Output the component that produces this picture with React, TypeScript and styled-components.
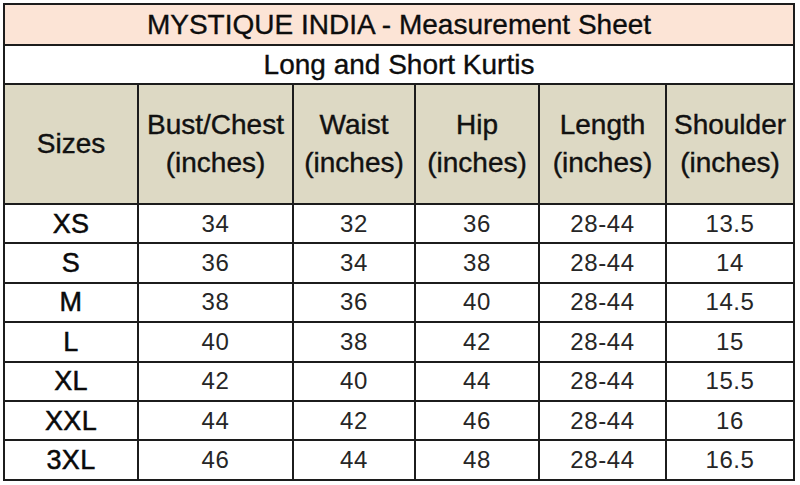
import React from "react";
import styled, { createGlobalStyle } from "styled-components";

const GlobalStyle = createGlobalStyle`
  html, body {
    margin: 0;
    padding: 0;
    background: #ffffff;
  }
  body {
    font-family: "Liberation Sans", Arial, sans-serif;
    color: #000;
  }
`;

const Page = styled.div`
  width: 800px;
  height: 485px;
  padding: 3px 0 0 3px;
  box-sizing: border-box;
  background: #ffffff;
  overflow: hidden;
`;

const Sheet = styled.table`
  width: 792px;
  table-layout: fixed;
  border-collapse: collapse;
  border: 2px solid #1c1c1c;
  font-family: "Liberation Sans", Arial, sans-serif;
`;

const Cell = styled.td<{ $bg?: string }>`
  border: 2px solid #1c1c1c;
  padding: 0;
  text-align: center;
  vertical-align: middle;
  background: ${(p) => p.$bg || "#ffffff"};
`;

const TitleCell = styled(Cell)`
  height: 38px;
  font-size: 28px;
  line-height: 32px;
  color: #0d0d0d;
  padding-top: 1px;
  -webkit-text-stroke: 0.35px #0d0d0d;
`;

const SubtitleCell = styled(Cell)`
  height: 37px;
  font-size: 28px;
  line-height: 32px;
  color: #0d0d0d;
  -webkit-text-stroke: 0.35px #0d0d0d;
`;

const HeadCell = styled(Cell)`
  height: 118px;
  font-size: 28px;
  line-height: 38px;
  color: #111;
  white-space: nowrap;
  -webkit-text-stroke: 0.4px #111;
`;

const Row = styled.tr`
  height: 39.4px;
`;

const SizeCell = styled(Cell)`
  font-size: 27px;
  line-height: 30px;
  color: #0a0a0a;
  letter-spacing: 0.3px;
  -webkit-text-stroke: 0.5px #0a0a0a;
`;

const NumCell = styled(Cell)`
  font-size: 24px;
  line-height: 30px;
  color: #262626;
  letter-spacing: 0.6px;
`;

const columns = [134, 155, 122, 124, 127, 128];

const headers: [string, string?][] = [
  ["Sizes"],
  ["Bust/Chest", "(inches)"],
  ["Waist", "(inches)"],
  ["Hip", "(inches)"],
  ["Length", "(inches)"],
  ["Shoulder", "(inches)"],
];

const rows: [string, string, string, string, string, string][] = [
  ["XS", "34", "32", "36", "28-44", "13.5"],
  ["S", "36", "34", "38", "28-44", "14"],
  ["M", "38", "36", "40", "28-44", "14.5"],
  ["L", "40", "38", "42", "28-44", "15"],
  ["XL", "42", "40", "44", "28-44", "15.5"],
  ["XXL", "44", "42", "46", "28-44", "16"],
  ["3XL", "46", "44", "48", "28-44", "16.5"],
];

export default function App() {
  return (
    <Page>
      <GlobalStyle />
      <Sheet>
        <colgroup>
          {columns.map((w, i) => (
            <col key={i} style={{ width: w }} />
          ))}
        </colgroup>
        <tbody>
          <tr>
            <TitleCell colSpan={6} $bg="#fce4d6">
              MYSTIQUE INDIA - Measurement Sheet
            </TitleCell>
          </tr>
          <tr>
            <SubtitleCell colSpan={6}>Long and Short Kurtis</SubtitleCell>
          </tr>
          <tr>
            {headers.map(([a, b], i) => (
              <HeadCell key={i} $bg="#ddd9c4">
                {a}
                {b && (
                  <>
                    <br />
                    {b}
                  </>
                )}
              </HeadCell>
            ))}
          </tr>
          {rows.map((r) => (
            <Row key={r[0]}>
              <SizeCell>{r[0]}</SizeCell>
              {r.slice(1).map((v, i) => (
                <NumCell key={i}>{v}</NumCell>
              ))}
            </Row>
          ))}
        </tbody>
      </Sheet>
    </Page>
  );
}
